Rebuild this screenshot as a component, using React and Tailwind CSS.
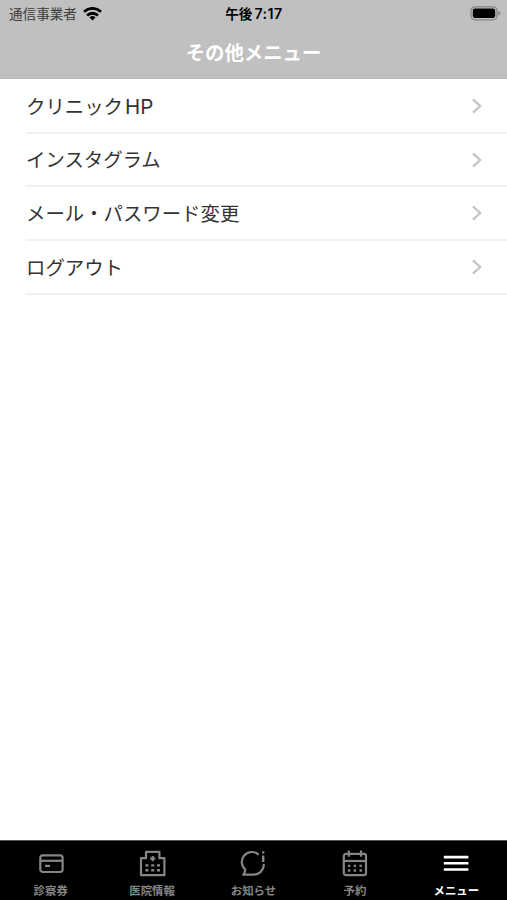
import React, { useState } from 'react';

const CardIcon = () => (
  <svg width="28" height="28" viewBox="0 0 28 28" fill="none" stroke="currentColor" strokeWidth="2.2">
    <rect x="3.3" y="6.4" width="22.3" height="16.6" rx="2.5" />
    <path d="M3.3 11.8h22.3" />
    <path d="M8 16.9h5" />
  </svg>
);

const HospitalIcon = () => (
  <svg width="28" height="28" viewBox="0 0 28 28" fill="none" stroke="currentColor" strokeWidth="2.2">
    <path d="M3 26.2V9.2h5V2.9h13.4v6.3h5v17z" strokeLinejoin="round" />
    <path d="M14.7 7v5.2M12.1 9.6h5.2" strokeWidth="2.2" />
    <path d="M7.4 16.4h3M13.2 16.4h3M19 16.4h3M7.4 21.2h3M13.2 21.2h3M19 21.2h3" strokeWidth="2.4" />
  </svg>
);

const NewsIcon = () => (
  <svg width="28" height="28" viewBox="0 0 28 28" fill="none" stroke="currentColor" strokeWidth="2.2">
    <path d="M18.8 5A10 10 0 0 0 6.3 20.6Q6.3 23.3 4.2 25.7H14.5A10.2 10.2 0 0 0 24.8 15.8" strokeLinecap="round" strokeLinejoin="round" />
    <path d="M24.2 2.2v2.4M24.2 6.6v6.4" strokeWidth="2.4" />
  </svg>
);

const CalendarIcon = () => (
  <svg width="28" height="28" viewBox="0 0 28 28" fill="none" stroke="currentColor" strokeWidth="2.2">
    <rect x="2.8" y="4.9" width="22.2" height="21.3" rx="2.2" />
    <path d="M2.8 12h22.2" />
    <path d="M7.8 1.4v6.3M20 1.4v6.3" />
    <path d="M6.9 16.9h2.4M12.7 16.9h2.4M18.5 16.9h2.4M6.9 21.5h2.4M12.7 21.5h2.4M18.5 21.5h2.4" strokeWidth="2.3" />
  </svg>
);

const MenuIcon = () => (
  <svg width="28" height="28" viewBox="0 0 28 28" fill="none" stroke="currentColor" strokeWidth="2.6">
    <path d="M1.8 8.1h24.6M1.8 14.3h24.6M1.8 20.5h24.6" />
  </svg>
);

const menuItems = [
  { label: 'クリニック', suffix: 'HP' },
  { label: 'インスタグラム' },
  { label: 'メール・パスワード変更' },
  { label: 'ログアウト' }
];

const tabs = [
  { id: 'card', label: '診察券', icon: CardIcon },
  { id: 'clinic', label: '医院情報', icon: HospitalIcon },
  { id: 'news', label: 'お知らせ', icon: NewsIcon },
  { id: 'reserve', label: '予約', icon: CalendarIcon },
  { id: 'menu', label: 'メニュー', icon: MenuIcon }
];

const StatusBar = () => (
  <div className="grid grid-cols-3 items-center h-7 pl-[9px] pr-[6px] text-[13.6px] leading-none text-black">
    <div className="flex items-center gap-[6px]">
      <span className="pt-px text-[#3c3c3c]">通信事業者</span>
      <svg width="19" height="14" viewBox="0 0 19 14" fill="none" stroke="black" strokeWidth="2.8">
        <path d="M1 4.8a12.2 12.2 0 0 1 17 0" />
        <path d="M4.1 8.4a7.8 7.8 0 0 1 10.8 0" />
        <path d="M9.5 13.5l-3-3a4.3 4.3 0 0 1 6 0z" fill="black" stroke="none" />
      </svg>
    </div>
    <span className="pt-px pr-[2px] text-center font-semibold whitespace-nowrap">
      午後<span className="ml-[2px] text-[14.2px] tracking-[0.5px]">7:17</span>
    </span>
    <svg className="justify-self-end" width="31" height="16" viewBox="0 0 31 16">
      <rect x="1" y="0.8" width="26" height="13" rx="4" fill="none" stroke="#858585" strokeWidth="1.3" />
      <rect x="2.8" y="2.6" width="22.4" height="9.4" rx="2.2" fill="black" />
      <path d="M28.3 5q2 .8 2 2.3t-2 2.3z" fill="#858585" />
    </svg>
  </div>
);

const App = () => {
  const [activeTab, setActiveTab] = useState('menu');

  return (
    <div className="flex flex-col w-full h-screen bg-white font-[Inter,'Noto_Sans_CJK_JP',sans-serif]">
      <header className="h-[79px] shrink-0 bg-[#c0c0c0] border-b border-[#b8b8b8]">
        <StatusBar />
        <h1 className="h-[49px] text-center text-[19.4px] leading-[50px] font-bold text-white">その他メニュー</h1>
      </header>

      <main className="flex-1">
        <ul className="pl-[26px] pt-px">
          {menuItems.map(({ label, suffix }) => (
            <li
              key={label}
              className="flex items-center justify-between h-[53.7px] pr-6 border-b-2 border-[#f0f0f0] text-[19.4px] text-[#333]"
            >
              <span className="pt-[3px]">
                {label}
                {suffix && <span className="ml-[2px] text-[20.5px]">{suffix}</span>}
              </span>
              <svg width="12" height="16" viewBox="0 0 12 16" fill="none" stroke="#c4c4c6" strokeWidth="2.2">
                <path d="M2 1.4l7.2 6.6L2 14.6" />
              </svg>
            </li>
          ))}
        </ul>
      </main>

      <nav className="grid grid-cols-5 h-[60px] shrink-0 bg-black border-t border-[#555]">
        {tabs.map(({ id, label, icon: Icon }) => (
          <button
            key={id}
            onClick={() => setActiveTab(id)}
            className={`flex flex-col items-center pt-2 ${activeTab === id ? 'text-white' : 'text-[#858585]'}`}
          >
            <Icon />
            <span className="mt-[5px] text-[11.4px] leading-[19px] font-semibold">{label}</span>
          </button>
        ))}
      </nav>
    </div>
  );
};

export default App;
